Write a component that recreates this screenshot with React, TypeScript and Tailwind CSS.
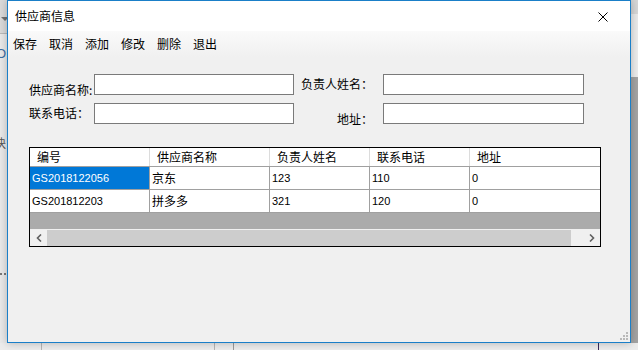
import React from 'react'

const cjk = "font-['Noto_Sans_CJK_SC','Noto_Sans',sans-serif]"
const latin = "font-['Liberation_Sans','Noto_Sans_CJK_SC',sans-serif]"

const menus = ['保存', '取消', '添加', '修改', '删除', '退出']

const columns = [
    { title: '编号', w: 'w-[120px]' },
    { title: '供应商名称', w: 'w-[120px]' },
    { title: '负责人姓名', w: 'w-[100px]' },
    { title: '联系电话', w: 'w-[100px]' },
    { title: '地址', w: 'flex-1' },
]

const rows = [
    ['GS2018122056', '京东', '123', '110', '0'],
    ['GS201812203', '拼多多', '321', '120', '0'],
]

function isCjk(s: string) {
    return /[\u4e00-\u9fff]/.test(s)
}

export default function App() {
    return (
        <div className="relative w-[638px] h-[350px] overflow-hidden bg-[#e9e9e9]">
            {/* desktop behind the dialog */}
            <div className="absolute left-0 top-0 w-[7px] h-[34px] bg-[#dadada] border-b border-[#b9b9b9]" />
            <div className="absolute left-[1px] top-[17px] w-0 h-0 border-l-[4px] border-r-[4px] border-t-[4px] border-l-transparent border-r-transparent border-t-[#707070]" />
            <div className={`absolute left-[-4px] top-[46px] text-[13px] leading-[16px] text-[#3b6ea5] ${latin}`}>O</div>
            <div className={`absolute left-[-6px] top-[135px] text-[12px] leading-[16px] text-[#555] ${cjk}`}>块</div>
            <div className="absolute left-0 top-[273px] w-[6px] border-t-2 border-dotted border-[#777]" />
            <div className="absolute right-0 top-0 w-[7px] h-[14px] bg-[#d6d6d6]" />
            <div className="absolute right-0 top-[30px] w-[7px] h-[47px] bg-[#ececec]" />
            <div className="absolute right-0 top-[77px] w-[7px] h-[273px] bg-[#a3a3a3]" />
            <div className="absolute left-0 top-[343px] w-[638px] h-[7px] bg-[#ececec]" />
            <div className="absolute left-[41px] top-[343px] w-px h-[7px] bg-[#b5b5b5]" />
            <div className="absolute left-[214px] top-[343px] w-px h-[7px] bg-[#b5b5b5]" />
            <div className="absolute left-[233px] top-[343px] w-px h-[7px] bg-[#9a9a9a]" />
            <div className="absolute left-[598px] top-[343px] w-px h-[7px] bg-[#3a2a5a]" />

            {/* dialog window */}
            <div className="absolute left-[7px] top-0 w-[624px] h-[343px] border border-[#1a7fc8] bg-[#f0f0f0] flex flex-col shadow-[0_0_8px_rgba(0,0,0,0.25)]">
                {/* title bar */}
                <div className="h-[30px] bg-white flex items-center justify-between shrink-0">
                    <span className={`pl-[7px] text-[12px] leading-[16px] text-black ${cjk}`}>供应商信息</span>
                    <svg width="10" height="10" viewBox="0 0 10 10" className="mr-[22px] mt-[1px]">
                        <path d="M0.5 0.5 L9.5 9.5 M9.5 0.5 L0.5 9.5" stroke="#000" strokeWidth="1" />
                    </svg>
                </div>

                {/* menu strip */}
                <div className="h-[26px] shrink-0 flex items-center pl-[5px] gap-[12px] bg-gradient-to-b from-[#fafafa] to-[#f0f0f0]">
                    {menus.map((m) => (
                        <span key={m} className={`text-[12px] leading-[16px] text-black ${cjk}`}>
                            {m}
                        </span>
                    ))}
                </div>

                {/* form */}
                <div className="pt-[17px] flex flex-col gap-[8px]">
                    <div className="flex items-start h-[21px]">
                        <div className={`w-[86px] pl-[21px] pt-[8px] text-[12px] leading-[16px] text-black whitespace-nowrap ${cjk}`}>供应商名称:</div>
                        <div className="w-[200px] h-[21px] bg-white border border-[#7a7a7a]" />
                        <div className={`w-[89px] pr-[10px] pt-[2px] text-right text-[12px] leading-[16px] text-black whitespace-nowrap ${cjk}`}>负责人姓名：</div>
                        <div className="w-[201px] h-[21px] bg-white border border-[#7a7a7a]" />
                    </div>
                    <div className="flex items-start h-[21px]">
                        <div className={`w-[86px] pl-[21px] pt-[2px] text-[12px] leading-[16px] text-black whitespace-nowrap ${cjk}`}>联系电话：</div>
                        <div className="w-[200px] h-[21px] bg-white border border-[#7a7a7a]" />
                        <div className={`w-[89px] pr-[10px] pt-[8px] text-right text-[12px] leading-[16px] text-black whitespace-nowrap ${cjk}`}>地址：</div>
                        <div className="w-[201px] h-[21px] bg-white border border-[#7a7a7a]" />
                    </div>
                </div>

                {/* data grid */}
                <div className="ml-[21px] mt-[23px] w-[572px] h-[100px] border border-black flex flex-col bg-[#ababab]">
                    <div className="h-[18px] flex bg-white">
                        {columns.map((c, i) => (
                            <div
                                key={c.title}
                                className={`${c.w} h-full flex items-center pl-[7px] text-[12px] leading-[16px] text-black ${cjk} ${i < columns.length - 1 ? 'border-r border-[#dcdcdc]' : ''}`}
                            >
                                {c.title}
                            </div>
                        ))}
                    </div>
                    {rows.map((r, ri) => (
                        <div key={ri} className="h-[23px] flex bg-white border-t border-[#a0a0a0]">
                            {r.map((v, ci) => {
                                const sel = ri === 0 && ci === 0
                                return (
                                    <div
                                        key={ci}
                                        className={`${columns[ci].w} h-full flex items-center pl-[2px] whitespace-nowrap ${
                                            isCjk(v) ? `text-[12px] ${cjk}` : `text-[11px] ${latin}`
                                        } leading-[16px] ${sel ? 'bg-[#0078d7] text-white' : 'text-black'} ${
                                            ci < r.length - 1 ? 'border-r border-[#a0a0a0]' : ''
                                        }`}
                                    >
                                        {v}
                                    </div>
                                )
                            })}
                        </div>
                    ))}
                    <div className="flex-1 border-t border-[#a0a0a0]" />
                    {/* horizontal scrollbar */}
                    <div className="h-[17px] flex bg-[#f0f0f0] border-t border-[#f0f0f0]">
                        <div className="w-[17px] h-full flex items-center justify-center">
                            <svg width="6" height="8" viewBox="0 0 6 8">
                                <path d="M5 0.5 L1.5 4 L5 7.5" stroke="#606060" strokeWidth="1.6" fill="none" />
                            </svg>
                        </div>
                        <div className="w-[524px] h-full bg-[#cdcdcd]" />
                        <div className="flex-1" />
                        <div className="w-[17px] h-full flex items-center justify-center">
                            <svg width="6" height="8" viewBox="0 0 6 8">
                                <path d="M1 0.5 L4.5 4 L1 7.5" stroke="#606060" strokeWidth="1.6" fill="none" />
                            </svg>
                        </div>
                    </div>
                </div>

                {/* size grip */}
                <div className="mt-auto self-end mr-[2px] mb-[2px]">
                    <svg width="8" height="8" viewBox="0 0 8 8">
                        <rect x="6" y="0" width="2" height="2" fill="#b8b8b8" />
                        <rect x="3" y="3" width="2" height="2" fill="#b8b8b8" />
                        <rect x="6" y="3" width="2" height="2" fill="#b8b8b8" />
                        <rect x="0" y="6" width="2" height="2" fill="#b8b8b8" />
                        <rect x="3" y="6" width="2" height="2" fill="#b8b8b8" />
                        <rect x="6" y="6" width="2" height="2" fill="#b8b8b8" />
                    </svg>
                </div>
            </div>
        </div>
    )
}
